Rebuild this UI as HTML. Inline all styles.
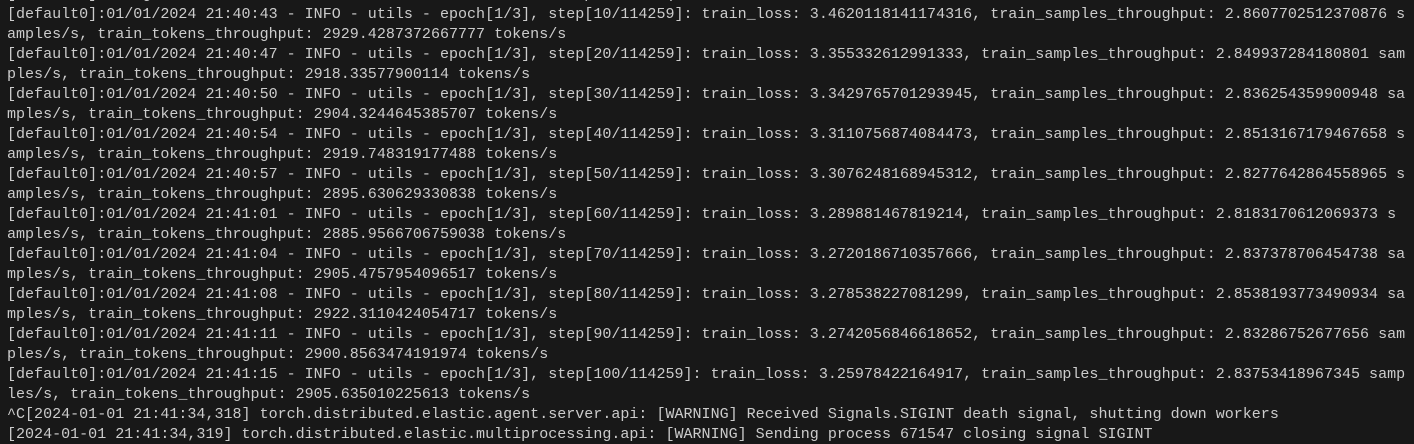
<!DOCTYPE html>
<html><head><meta charset="utf-8"><style>
html,body{margin:0;padding:0;background:#181818;width:1414px;height:431px;overflow:hidden}
pre{margin:0;position:absolute;left:7px;top:-16px;font-family:"Liberation Mono",monospace;font-size:15.04px;line-height:20px;color:#cccccc;white-space:pre}
</style></head><body><pre>[default0]:Using the `WANDB_DISABLED` environment variable is deprecated (
[default0]:01/01/2024 21:40:43 - INFO - utils - epoch[1/3], step[10/114259]: train_loss: 3.4620118141174316, train_samples_throughput: 2.8607702512370876 s
amples/s, train_tokens_throughput: 2929.4287372667777 tokens/s
[default0]:01/01/2024 21:40:47 - INFO - utils - epoch[1/3], step[20/114259]: train_loss: 3.355332612991333, train_samples_throughput: 2.849937284180801 sam
ples/s, train_tokens_throughput: 2918.33577900114 tokens/s
[default0]:01/01/2024 21:40:50 - INFO - utils - epoch[1/3], step[30/114259]: train_loss: 3.3429765701293945, train_samples_throughput: 2.836254359900948 sa
mples/s, train_tokens_throughput: 2904.3244645385707 tokens/s
[default0]:01/01/2024 21:40:54 - INFO - utils - epoch[1/3], step[40/114259]: train_loss: 3.3110756874084473, train_samples_throughput: 2.8513167179467658 s
amples/s, train_tokens_throughput: 2919.748319177488 tokens/s
[default0]:01/01/2024 21:40:57 - INFO - utils - epoch[1/3], step[50/114259]: train_loss: 3.3076248168945312, train_samples_throughput: 2.8277642864558965 s
amples/s, train_tokens_throughput: 2895.630629330838 tokens/s
[default0]:01/01/2024 21:41:01 - INFO - utils - epoch[1/3], step[60/114259]: train_loss: 3.289881467819214, train_samples_throughput: 2.8183170612069373 s
amples/s, train_tokens_throughput: 2885.9566706759038 tokens/s
[default0]:01/01/2024 21:41:04 - INFO - utils - epoch[1/3], step[70/114259]: train_loss: 3.2720186710357666, train_samples_throughput: 2.837378706454738 sa
mples/s, train_tokens_throughput: 2905.4757954096517 tokens/s
[default0]:01/01/2024 21:41:08 - INFO - utils - epoch[1/3], step[80/114259]: train_loss: 3.278538227081299, train_samples_throughput: 2.8538193773490934 sa
mples/s, train_tokens_throughput: 2922.3110424054717 tokens/s
[default0]:01/01/2024 21:41:11 - INFO - utils - epoch[1/3], step[90/114259]: train_loss: 3.2742056846618652, train_samples_throughput: 2.83286752677656 sam
ples/s, train_tokens_throughput: 2900.8563474191974 tokens/s
[default0]:01/01/2024 21:41:15 - INFO - utils - epoch[1/3], step[100/114259]: train_loss: 3.25978422164917, train_samples_throughput: 2.83753418967345 samp
les/s, train_tokens_throughput: 2905.635010225613 tokens/s
^C[2024-01-01 21:41:34,318] torch.distributed.elastic.agent.server.api: [WARNING] Received Signals.SIGINT death signal, shutting down workers
[2024-01-01 21:41:34,319] torch.distributed.elastic.multiprocessing.api: [WARNING] Sending process 671547 closing signal SIGINT</pre></body></html>
